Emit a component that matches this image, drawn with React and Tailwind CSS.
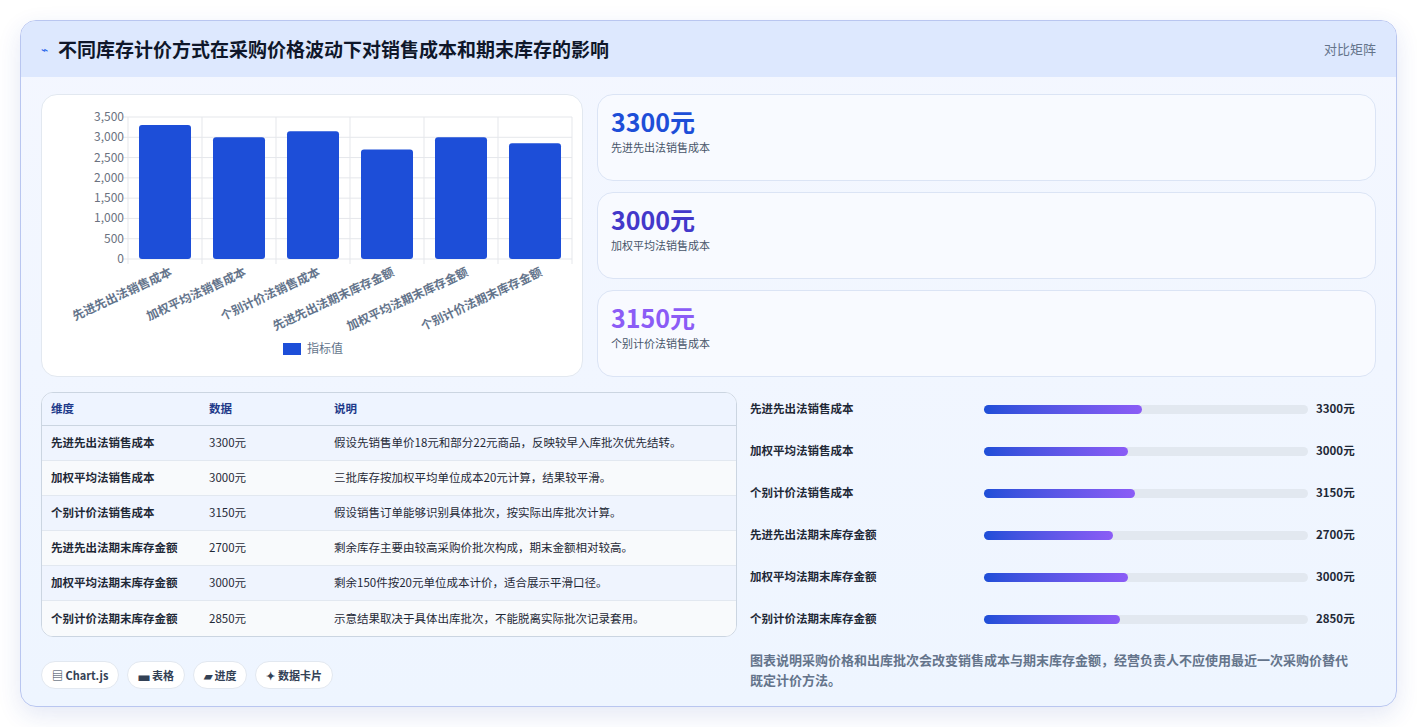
import React from 'react'

const data = [
  { name: '先进先出法销售成本', value: 3300, note: '假设先销售单价18元和部分22元商品，反映较早入库批次优先结转。' },
  { name: '加权平均法销售成本', value: 3000, note: '三批库存按加权平均单位成本20元计算，结果较平滑。' },
  { name: '个别计价法销售成本', value: 3150, note: '假设销售订单能够识别具体批次，按实际出库批次计算。' },
  { name: '先进先出法期末库存金额', value: 2700, note: '剩余库存主要由较高采购价批次构成，期末金额相对较高。' },
  { name: '加权平均法期末库存金额', value: 3000, note: '剩余150件按20元单位成本计价，适合展示平滑口径。' },
  { name: '个别计价法期末库存金额', value: 2850, note: '示意结果取决于具体出库批次，不能脱离实际批次记录套用。' },
]

const font = { fontFamily: '"Noto Sans CJK SC", "Noto Sans", sans-serif' }

function Chart() {
  const x0 = 86, x1 = 530, y0 = 22, y1 = 164
  const step = (x1 - x0) / 6
  const yOf = v => y1 - (v / 3500) * (y1 - y0)
  const ticks = [0, 500, 1000, 1500, 2000, 2500, 3000, 3500]
  return (
    <svg width="542" height="283" style={font}>
      {ticks.map(t => (
        <g key={t}>
          <line x1={x0 - 5} x2={x1} y1={yOf(t)} y2={yOf(t)} stroke="#e5e7eb" />
          <text x={x0 - 4} y={yOf(t) + 4} fontSize="12" fill="#6b7280" textAnchor="end">{t.toLocaleString('en-US')}</text>
        </g>
      ))}
      {[0, 1, 2, 3, 4, 5, 6].map(i => (
        <line key={i} x1={x0 + i * step} x2={x0 + i * step} y1={y0} y2={y1 + 5} stroke="#e5e7eb" />
      ))}
      {data.map((d, i) => {
        const cx = x0 + step * i + step / 2
        return (
          <g key={d.name}>
            <rect x={cx - 26} y={yOf(d.value)} width="52" height={y1 - yOf(d.value)} rx="3" fill="#1d4ed8" />
            <text x={cx + 8} y={y1 + 16} fontSize="12" fontWeight="600" fill="#64748b" textAnchor="end" transform={`rotate(-25 ${cx + 8} ${y1 + 16})`}>{d.name}</text>
          </g>
        )
      })}
      <rect x="241" y="248" width="18" height="12" fill="#1d4ed8" />
      <text x="265" y="258" fontSize="12" fill="#64748b">指标值</text>
    </svg>
  )
}

const cards = [
  { v: '3300元', l: '先进先出法销售成本', c: 'text-[#1d4ed8]' },
  { v: '3000元', l: '加权平均法销售成本', c: 'text-[#4338ca]' },
  { v: '3150元', l: '个别计价法销售成本', c: 'text-[#8b5cf6]' },
]

export default function App() {
  return (
    <div className="min-h-[727px] bg-white p-5" style={font}>
      <div className="w-[1377px] h-[687px] rounded-2xl border border-[#b9c6f0] bg-gradient-to-b from-[#f4f7ff] to-[#eef5ff] shadow-[0_8px_24px_rgba(30,64,175,0.12)] overflow-hidden">
        <div className="h-[56px] bg-[#dde8fe] flex items-center justify-between px-5">
          <div className="flex items-center gap-2.5">
            <span className="text-[#2563eb] text-[12px]">⌁</span>
            <h1 className="text-[19px] font-bold text-[#0f172a]">不同库存计价方式在采购价格波动下对销售成本和期末库存的影响</h1>
          </div>
          <span className="text-[13px] text-[#64748b]">对比矩阵</span>
        </div>
        <div className="px-5 pt-[17px]">
          <div className="flex gap-[14px]">
            <div className="w-[542px] h-[283px] bg-white rounded-2xl border border-[#e2e8f0]">
              <Chart />
            </div>
            <div className="flex-1 flex flex-col gap-[11px]">
              {cards.map(c => (
                <div key={c.v} className="h-[87px] rounded-2xl bg-[#f8faff] border border-[#dbe4f5] px-[13px] pt-[10px]">
                  <div className={`text-[25px] font-bold leading-[32px] ${c.c}`}>{c.v}</div>
                  <div className="text-[11px] text-[#475569] mt-0.5">{c.l}</div>
                </div>
              ))}
            </div>
          </div>
          <div className="flex gap-[13px] mt-[15px]">
            <div className="w-[696px]">
              <div className="rounded-xl border border-[#cbd5e1] overflow-hidden bg-white text-[11.5px]">
                <div className="flex h-[33px] items-center bg-[#eef4ff] border-b border-[#cbd5e1] font-bold text-[#1e3a8a]">
                  <div className="w-[167px] pl-[9px]">维度</div>
                  <div className="w-[125px]">数据</div>
                  <div>说明</div>
                </div>
                {data.map((d, i) => (
                  <div key={d.name} className={`flex h-[35px] items-center text-[#1f2937] ${i < 5 ? 'border-b border-[#e2e8f0]' : ''} ${i % 2 ? 'bg-[#f8fafc]' : 'bg-[#eff4fe]'}`}>
                    <div className="w-[167px] pl-[9px] font-semibold">{d.name}</div>
                    <div className="w-[125px]">{d.value}元</div>
                    <div>{d.note}</div>
                  </div>
                ))}
              </div>
              <div className="flex gap-2 mt-[24px] text-[11px] font-semibold text-[#334155]">
                {['▤ Chart.js', '▄ 表格', '▰ 进度', '✦ 数据卡片'].map(t => (
                  <span key={t} className="h-[28px] px-2.5 flex items-center rounded-full bg-white border border-[#e2e8f0]">{t}</span>
                ))}
              </div>
            </div>
            <div className="flex-1 pr-[21px]">
              <div className="flex flex-col gap-[24px] pt-[8px]">
                {data.map(d => (
                  <div key={d.name} className="flex items-center h-[18px] text-[11.5px] font-semibold text-[#1f2937]">
                    <div className="w-[234px]">{d.name}</div>
                    <div className="w-[324px] h-[9px] rounded-full bg-[#e2e8f0]">
                      <div className="h-full rounded-full bg-gradient-to-r from-[#1d4ed8] to-[#8b5cf6]" style={{ width: `${(d.value / 6770) * 100}%` }} />
                    </div>
                    <div className="ml-2">{d.value}元</div>
                  </div>
                ))}
              </div>
              <p className="mt-[22px] text-[13px] leading-[20px] text-[#64748b] font-semibold">图表说明采购价格和出库批次会改变销售成本与期末库存金额，经营负责人不应使用最近一次采购价替代既定计价方法。</p>
            </div>
          </div>
        </div>
      </div>
    </div>
  )
}
